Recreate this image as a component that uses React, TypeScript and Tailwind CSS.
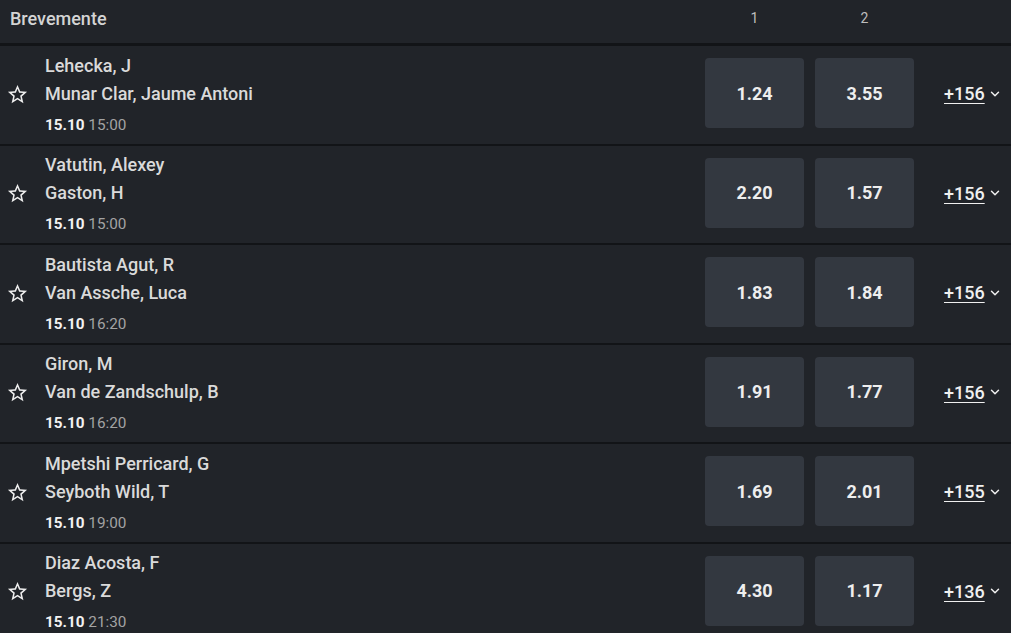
import { ChevronDown } from "lucide-react";

interface Match {
    home: string;
    away: string;
    date: string;
    time: string;
    odd1: string;
    odd2: string;
    more: string;
}

const matches: Match[] = [
    { home: "Lehecka, J", away: "Munar Clar, Jaume Antoni", date: "15.10", time: "15:00", odd1: "1.24", odd2: "3.55", more: "+156" },
    { home: "Vatutin, Alexey", away: "Gaston, H", date: "15.10", time: "15:00", odd1: "2.20", odd2: "1.57", more: "+156" },
    { home: "Bautista Agut, R", away: "Van Assche, Luca", date: "15.10", time: "16:20", odd1: "1.83", odd2: "1.84", more: "+156" },
    { home: "Giron, M", away: "Van de Zandschulp, B", date: "15.10", time: "16:20", odd1: "1.91", odd2: "1.77", more: "+156" },
    { home: "Mpetshi Perricard, G", away: "Seyboth Wild, T", date: "15.10", time: "19:00", odd1: "1.69", odd2: "2.01", more: "+155" },
    { home: "Diaz Acosta, F", away: "Bergs, Z", date: "15.10", time: "21:30", odd1: "4.30", odd2: "1.17", more: "+136" },
];

function StarIcon() {
    return (
        <svg viewBox="0 0 24 24" className="w-[23px] h-[23px]" fill="#eeeeee">
            <path d="M22 9.24l-7.19-.62L12 2 9.19 8.63 2 9.24l5.46 4.73L5.82 21 12 17.27 18.18 21l-1.63-7.03L22 9.24zM12 15.4l-3.76 2.27 1-4.28-3.32-2.88 4.38-.38L12 6.1l1.71 4.04 4.38.38-3.32 2.88 1 4.28L12 15.4z" />
        </svg>
    );
}

export default function App() {
    return (
        <div
            className="w-[1011px] h-[633px] overflow-hidden bg-[#212429] text-[#d9d9d9]"
            style={{ fontFamily: "Roboto, 'Liberation Sans', sans-serif" }}
        >
            {/* Header */}
            <div className="flex items-start h-[46px] border-b-[3px] border-[#121417]">
                <div className="flex-1 pl-[10px] pt-[7px] text-[18px] leading-[24px] font-medium text-[#d4d4d4]">
                    Brevemente
                </div>
                <div className="flex gap-[11px] pt-[8px] text-[14px] leading-[20px] text-[#bdbdbd]">
                    <div className="w-[99px] text-center">1</div>
                    <div className="w-[99px] text-center">2</div>
                </div>
                <div className="w-[97px]" />
            </div>

            {/* Rows */}
            {matches.map((m, i) => (
                <div
                    key={i}
                    className="flex items-center h-[99.5px] border-b-2 border-[#121417]"
                >
                    <div className="w-[45px] flex pl-[6px] mb-[1px]">
                        <StarIcon />
                    </div>
                    <div className="flex-1 pt-[1px]">
                        <div className="text-[18px] leading-[28px] font-medium text-[#dadada]">{m.home}</div>
                        <div className="text-[18px] leading-[28px] font-medium text-[#dadada]">{m.away}</div>
                        <div className="mt-[3px] text-[15.3px] leading-[28px]">
                            <span className="font-bold text-[#f2f2f2]">{m.date}</span>{" "}
                            <span className="text-[#a3a3a3]">{m.time}</span>
                        </div>
                    </div>
                    <div className="flex gap-[11px] mb-[3px]">
                        <button className="w-[99px] h-[70px] rounded-[4px] bg-[#333840] text-[18px] font-bold text-[#eeeeee]">
                            {m.odd1}
                        </button>
                        <button className="w-[99px] h-[70px] rounded-[4px] bg-[#333840] text-[18px] font-bold text-[#eeeeee]">
                            {m.odd2}
                        </button>
                    </div>
                    <div className="w-[97px] pl-[30px] flex items-center gap-[3px] mb-[2px]">
                        <span className="text-[18px] font-medium underline underline-offset-[3px] text-[#f0f0f0]">
                            {m.more}
                        </span>
                        <ChevronDown size={14} strokeWidth={2.5} className="text-[#f0f0f0]" />
                    </div>
                </div>
            ))}
        </div>
    );
}
